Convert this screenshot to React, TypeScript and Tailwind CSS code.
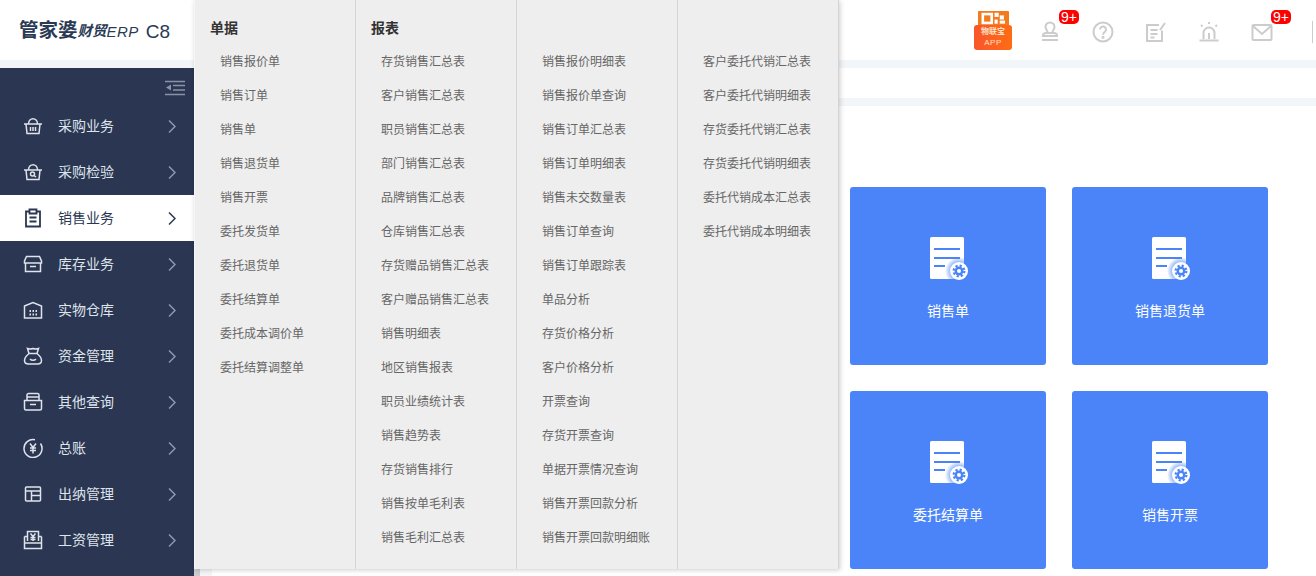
import type { ReactNode } from "react";

const cjk = "font-['Liberation_Sans','Noto_Sans_CJK_SC',sans-serif]";

const ic = {
  fill: "none",
  stroke: "currentColor",
  strokeWidth: 1.5,
  viewBox: "0 0 20 20",
  className: "w-[20px] h-[20px]",
};

const icons: Record<string, ReactNode> = {
  basket: (
    <svg {...ic}>
      <path d="M1 8h18M3 8l1 9.500h12L17 8M5.500 8c0-7 9-7 9 0M7.500 11v4M10 11v4M12.500 11v4" />
    </svg>
  ),
  inspect: (
    <svg {...ic}>
      <path d="M1 8h18M3 8l1 9.500h12L17 8M5.500 8c0-7 9-7 9 0" />
      <circle cx="9.500" cy="12" r="2" />
      <path d="M11 13.500l2 1.500" />
    </svg>
  ),
  sale: (
    <svg {...ic} strokeWidth={1.8}>
      <path d="M6.500 3.500H3v15h14v-15h-3.500M6.500 1.500h7v4h-7zM6.500 9.500h7M6.500 13.500h7" />
    </svg>
  ),
  box: (
    <svg {...ic}>
      <path d="M3.500 2.500h13l2 4.500v2h-17V7zM2.500 9v8.500h15V9M7 12.500h6" />
    </svg>
  ),
  warehouse: (
    <svg {...ic}>
      <path d="M1.500 6L10 2.500 18.500 6v12h-17z" />
      <path d="M6.500 11h1.500M9.500 11H11M12.500 11H14M6.500 14.500h1.500M9.500 14.500H11M12.500 14.500H14" strokeWidth={2} />
    </svg>
  ),
  money: (
    <svg {...ic}>
      <path d="M6 7.500L4.500 2.500c2 .8 3.500.8 5.500 0 2 .8 3.500.8 5.500 0L14 7.500c2.500 2 4.500 4.500 4.500 7 0 2.500-2 3.500-4 3.500h-9c-2 0-4-1-4-3.500 0-2.500 2-5 4.500-7zM6 7.500h8M7 13c1.500 1.800 4.500 1.800 6 0" />
    </svg>
  ),
  query: (
    <svg {...ic}>
      <path d="M4 8V3a1.500 1.500 0 011.500-1.500h9A1.500 1.500 0 0116 3v5M1.500 8.500h17v8a1.500 1.500 0 01-1.500 1.500H3a1.500 1.500 0 01-1.500-1.500zM4.500 5h11M7 12.500h6" />
    </svg>
  ),
  ledger: (
    <svg {...ic}>
      <path d="M17.500 5.500A9 9 0 1112 1.700" />
      <path d="M7 5.500l3 4 3-4M10 9.500v6M7 10h6M7 12.500h6" />
    </svg>
  ),
  cash: (
    <svg {...ic}>
      <rect x="2.500" y="3" width="15" height="14" rx="1" />
      <path d="M2.500 7h15M8.500 7v10M8.500 11.500h9" />
    </svg>
  ),
  salary: (
    <svg {...ic}>
      <path d="M4.500 11V1.500h11V11M1.500 6.500h3M15.500 6.500h3M1.500 6.500v12h17v-12M1.500 13h17M7.500 3.500L10 6.500l2.500-3M10 6.500v4.500M7.500 7.500h5M7.500 9.500h5" />
    </svg>
  ),
};

const navItems = [
  { label: "采购业务", icon: "basket" },
  { label: "采购检验", icon: "inspect" },
  { label: "销售业务", icon: "sale", active: true },
  { label: "库存业务", icon: "box" },
  { label: "实物仓库", icon: "warehouse" },
  { label: "资金管理", icon: "money" },
  { label: "其他查询", icon: "query" },
  { label: "总账", icon: "ledger" },
  { label: "出纳管理", icon: "cash" },
  { label: "工资管理", icon: "salary" },
];

const columns = [
  {
    title: "单据",
    items: ["销售报价单", "销售订单", "销售单", "销售退货单", "销售开票", "委托发货单", "委托退货单", "委托结算单", "委托成本调价单", "委托结算调整单"],
  },
  {
    title: "报表",
    items: ["存货销售汇总表", "客户销售汇总表", "职员销售汇总表", "部门销售汇总表", "品牌销售汇总表", "仓库销售汇总表", "存货赠品销售汇总表", "客户赠品销售汇总表", "销售明细表", "地区销售报表", "职员业绩统计表", "销售趋势表", "存货销售排行", "销售按单毛利表", "销售毛利汇总表"],
  },
  {
    title: "",
    items: ["销售报价明细表", "销售报价单查询", "销售订单汇总表", "销售订单明细表", "销售未交数量表", "销售订单查询", "销售订单跟踪表", "单品分析", "存货价格分析", "客户价格分析", "开票查询", "存货开票查询", "单据开票情况查询", "销售开票回款分析", "销售开票回款明细账"],
  },
  {
    title: "",
    items: ["客户委托代销汇总表", "客户委托代销明细表", "存货委托代销汇总表", "存货委托代销明细表", "委托代销成本汇总表", "委托代销成本明细表"],
  },
];

const Badge = () => (
  <span className="absolute -top-[11px] left-[20px] w-[20px] h-[14px] rounded-[5px] bg-[#ff0000] text-white text-[14px] leading-[14px] text-center font-['Liberation_Sans',sans-serif]">
    9+
  </span>
);

const gray = { fill: "none", stroke: "#cccccc", strokeWidth: 2, viewBox: "0 0 22 22", className: "w-[22px] h-[22px]" };

const DocCard = ({ label }: { label: string }) => (
  <div className="w-[196px] h-[178px] rounded-[3px] bg-[#4a84f8] flex flex-col items-center pt-[50px]">
    <svg viewBox="0 0 38 43" className="w-[38px] h-[43px] ml-[2px]">
      <defs>
        <radialGradient id="gearGlow">
          <stop offset="0.6" stopColor="#4a84f8" stopOpacity="0.6" />
          <stop offset="1" stopColor="#4a84f8" stopOpacity="0" />
        </radialGradient>
      </defs>
      <rect x="0" y="0" width="34" height="42" rx="1.500" fill="#ffffff" />
      <path d="M4 12h26M4 21h26M4 29h11" stroke="#4a84f8" strokeWidth="2" />
      <circle cx="29" cy="34" r="14" fill="url(#gearGlow)" />
      <circle cx="29" cy="34" r="9" fill="#ffffff" />
      <circle cx="29" cy="34" r="4.500" fill="#4a84f8" />
      <circle cx="29" cy="34" r="5.400" fill="none" stroke="#4a84f8" strokeWidth="2.200" strokeDasharray="2.200 2.040" />
      <circle cx="29" cy="34" r="2" fill="#ffffff" />
    </svg>
    <span className={`mt-[21px] text-[14px] leading-[20px] text-white ${cjk}`}>{label}</span>
  </div>
);

const App = () => {
  return (
    <div className={`relative w-[1316px] h-[576px] overflow-hidden bg-white flex flex-col ${cjk}`}>
      <header className="h-[60px] shrink-0 flex bg-white">
        <div className="w-[194px] shrink-0 flex items-center pl-[19px] pt-[2px] text-[#2a3a55]">
          <span className="text-[19.500px] font-bold leading-none">管家婆</span>
          <span className="text-[14.500px] font-bold italic leading-none">财贸</span>
          <span className="text-[15px] italic leading-none tracking-[0.500px] font-['Liberation_Sans',sans-serif]">ERP</span>
          <span className="ml-[7px] text-[19px] leading-none font-['Liberation_Sans',sans-serif]">C8</span>
        </div>
        <div className="flex-1 flex items-center justify-end pt-[4px]">
          <div className="flex items-center mr-[3px]">
            <div className="flex flex-col items-center w-[38px] mr-[27px] -mt-[4px]">
              <div className="w-[31px] h-[14px] bg-[#f47a1e] rounded-t-[1px] flex items-start justify-center pt-[1px]">
                <svg viewBox="0 0 24 12" className="w-[25px] h-[13px]">
                  <rect x="0.500" y="0.500" width="11" height="11" fill="#fff" />
                  <rect x="3" y="3" width="6" height="6" fill="#f47a1e" />
                  <rect x="13" y="0.500" width="4" height="4" fill="#fff" />
                  <rect x="18" y="3" width="4" height="4" fill="#fff" />
                  <rect x="13" y="7" width="3" height="4" fill="#fff" />
                  <rect x="18" y="8" width="5" height="3" fill="#fff" />
                </svg>
              </div>
              <div className="w-[38px] h-[25px] rounded-[3px] bg-gradient-to-r from-[#f9552a] to-[#ff6c12] text-[#ffe2c4] text-center flex flex-col items-center">
                <span className="text-[8px] font-bold leading-[12px] mt-[1px]">物联宝</span>
                <span className="text-[8px] leading-[9px] tracking-[0.500px]">APP</span>
              </div>
            </div>
            <div className="relative w-[22px] h-[22px] mr-[31px]">
              <svg {...gray}>
                <path d="M7 12h8c2 0 3 .5 3 2.500V15H4v-.5C4 12.500 5 12 7 12zM8.500 12c1-1.500-2-3-2-6a4.500 4.500 0 019 0c0 3-3 4.500-2 6M3 19h16" />
              </svg>
              <Badge />
            </div>
            <div className="w-[22px] h-[22px] mr-[31px]">
              <svg {...gray}>
                <circle cx="11" cy="11" r="9.500" />
                <path d="M8 8.500a3 3 0 115 2.200c-1.200 1-2 1.500-2 3" />
                <circle cx="11" cy="16.300" r="0.600" fill="#cccccc" />
              </svg>
            </div>
            <div className="w-[22px] h-[22px] mr-[31px]">
              <svg {...gray}>
                <path d="M17 9.500V20H2V4h12M5.500 9h7M5.500 13h7M5.500 16.500h4M15 9l5-7" />
              </svg>
            </div>
            <div className="w-[22px] h-[22px] mr-[31px]">
              <svg {...gray}>
                <path d="M5.500 18v-6a5.500 5.500 0 0111 0v6M1.500 19.500h19M11 12v6M11 1v2M3 4l1.500 1.500M19 4l-1.500 1.500" />
              </svg>
            </div>
            <div className="relative w-[22px] h-[22px] mr-[39px]">
              <svg {...gray}>
                <rect x="1.500" y="4" width="19" height="15" rx="1" />
                <path d="M2 5l9 8 9-8" />
              </svg>
              <Badge />
            </div>
            <div className="w-px h-[22px] bg-[#cccccc]" />
          </div>
        </div>
      </header>

      <div className="h-[8px] shrink-0 bg-[#f3f6f8]" />

      <div className="flex-1 min-h-0 flex">
        <aside className="w-[194px] shrink-0 bg-[#2a3652] flex flex-col">
          <div className="h-[35px] shrink-0 flex justify-end items-end pr-[9px] pb-[7px]">
            <svg viewBox="0 0 20 16" fill="none" stroke="#8a93a5" strokeWidth="1.600" className="w-[20px] h-[16px]">
              <path d="M0 1.500h20M8 5.500h12M8 10h12M0 14.500h20" />
              <path d="M6 4.500v6L1 7.500z" fill="#8a93a5" stroke="none" />
            </svg>
          </div>
          {navItems.map((item) => (
            <div
              key={item.label}
              className={`h-[46px] shrink-0 flex items-center pl-[23px] pr-[18px] ${item.active ? "bg-white text-[#2a3652]" : "text-[#dfe3ea]"}`}
            >
              <span className="w-[20px] h-[20px] shrink-0">{icons[item.icon]}</span>
              <span className="ml-[15px] flex-1 text-[14px] leading-[20px]">{item.label}</span>
              <svg
                viewBox="0 0 8 13"
                fill="none"
                stroke="currentColor"
                strokeWidth="1.500"
                className={`w-[8px] h-[13px] ${item.active ? "text-[#2a3652]" : "text-[#8c99b3]"}`}
              >
                <path d="M1 0.500l6 6-6 6" />
              </svg>
            </div>
          ))}
        </aside>

        <main className="flex-1 min-w-0 bg-white flex">
          <div className="w-[6px] shrink-0 bg-[#cdcdcd]" />
          <div className="w-[12px] shrink-0 bg-[#f3f6f8]" />
          <div className="flex-1 min-w-0 flex flex-col -ml-[18px]">
            <div className="h-[30px] shrink-0 ml-[18px]" />
            <div className="h-[8px] shrink-0 bg-[#f3f6f8] ml-[18px]" />
            <div className="pl-[656px] pt-[81px] grid grid-cols-[196px_196px] grid-rows-[178px_178px] gap-x-[26px] gap-y-[26px]">
              <DocCard label="销售单" />
              <DocCard label="销售退货单" />
              <DocCard label="委托结算单" />
              <DocCard label="销售开票" />
            </div>
          </div>
        </main>
      </div>

      {/* fly-out menu over the page */}
      <div className="absolute left-[194px] top-0 h-[569px] w-[645px] bg-[#eeeeee] border-l border-[#f6f6f6] flex shadow-[1px_1px_5px_rgba(0,0,0,0.2)]">
        {columns.map((col, i) => (
          <div key={i} className="w-[161px] shrink-0 h-full border-r border-[#d4d4d4] flex flex-col">
            <div className="h-[45px] shrink-0 pl-[15px] pt-[18px] text-[14px] leading-[20px] font-bold text-[#333333]">{col.title}</div>
            {col.items.map((t) => (
              <div key={t} className="h-[34px] shrink-0 pl-[25px] text-[12px] leading-[34px] text-[#666666] whitespace-nowrap">
                {t}
              </div>
            ))}
          </div>
        ))}
      </div>
    </div>
  );
};

export default App;
